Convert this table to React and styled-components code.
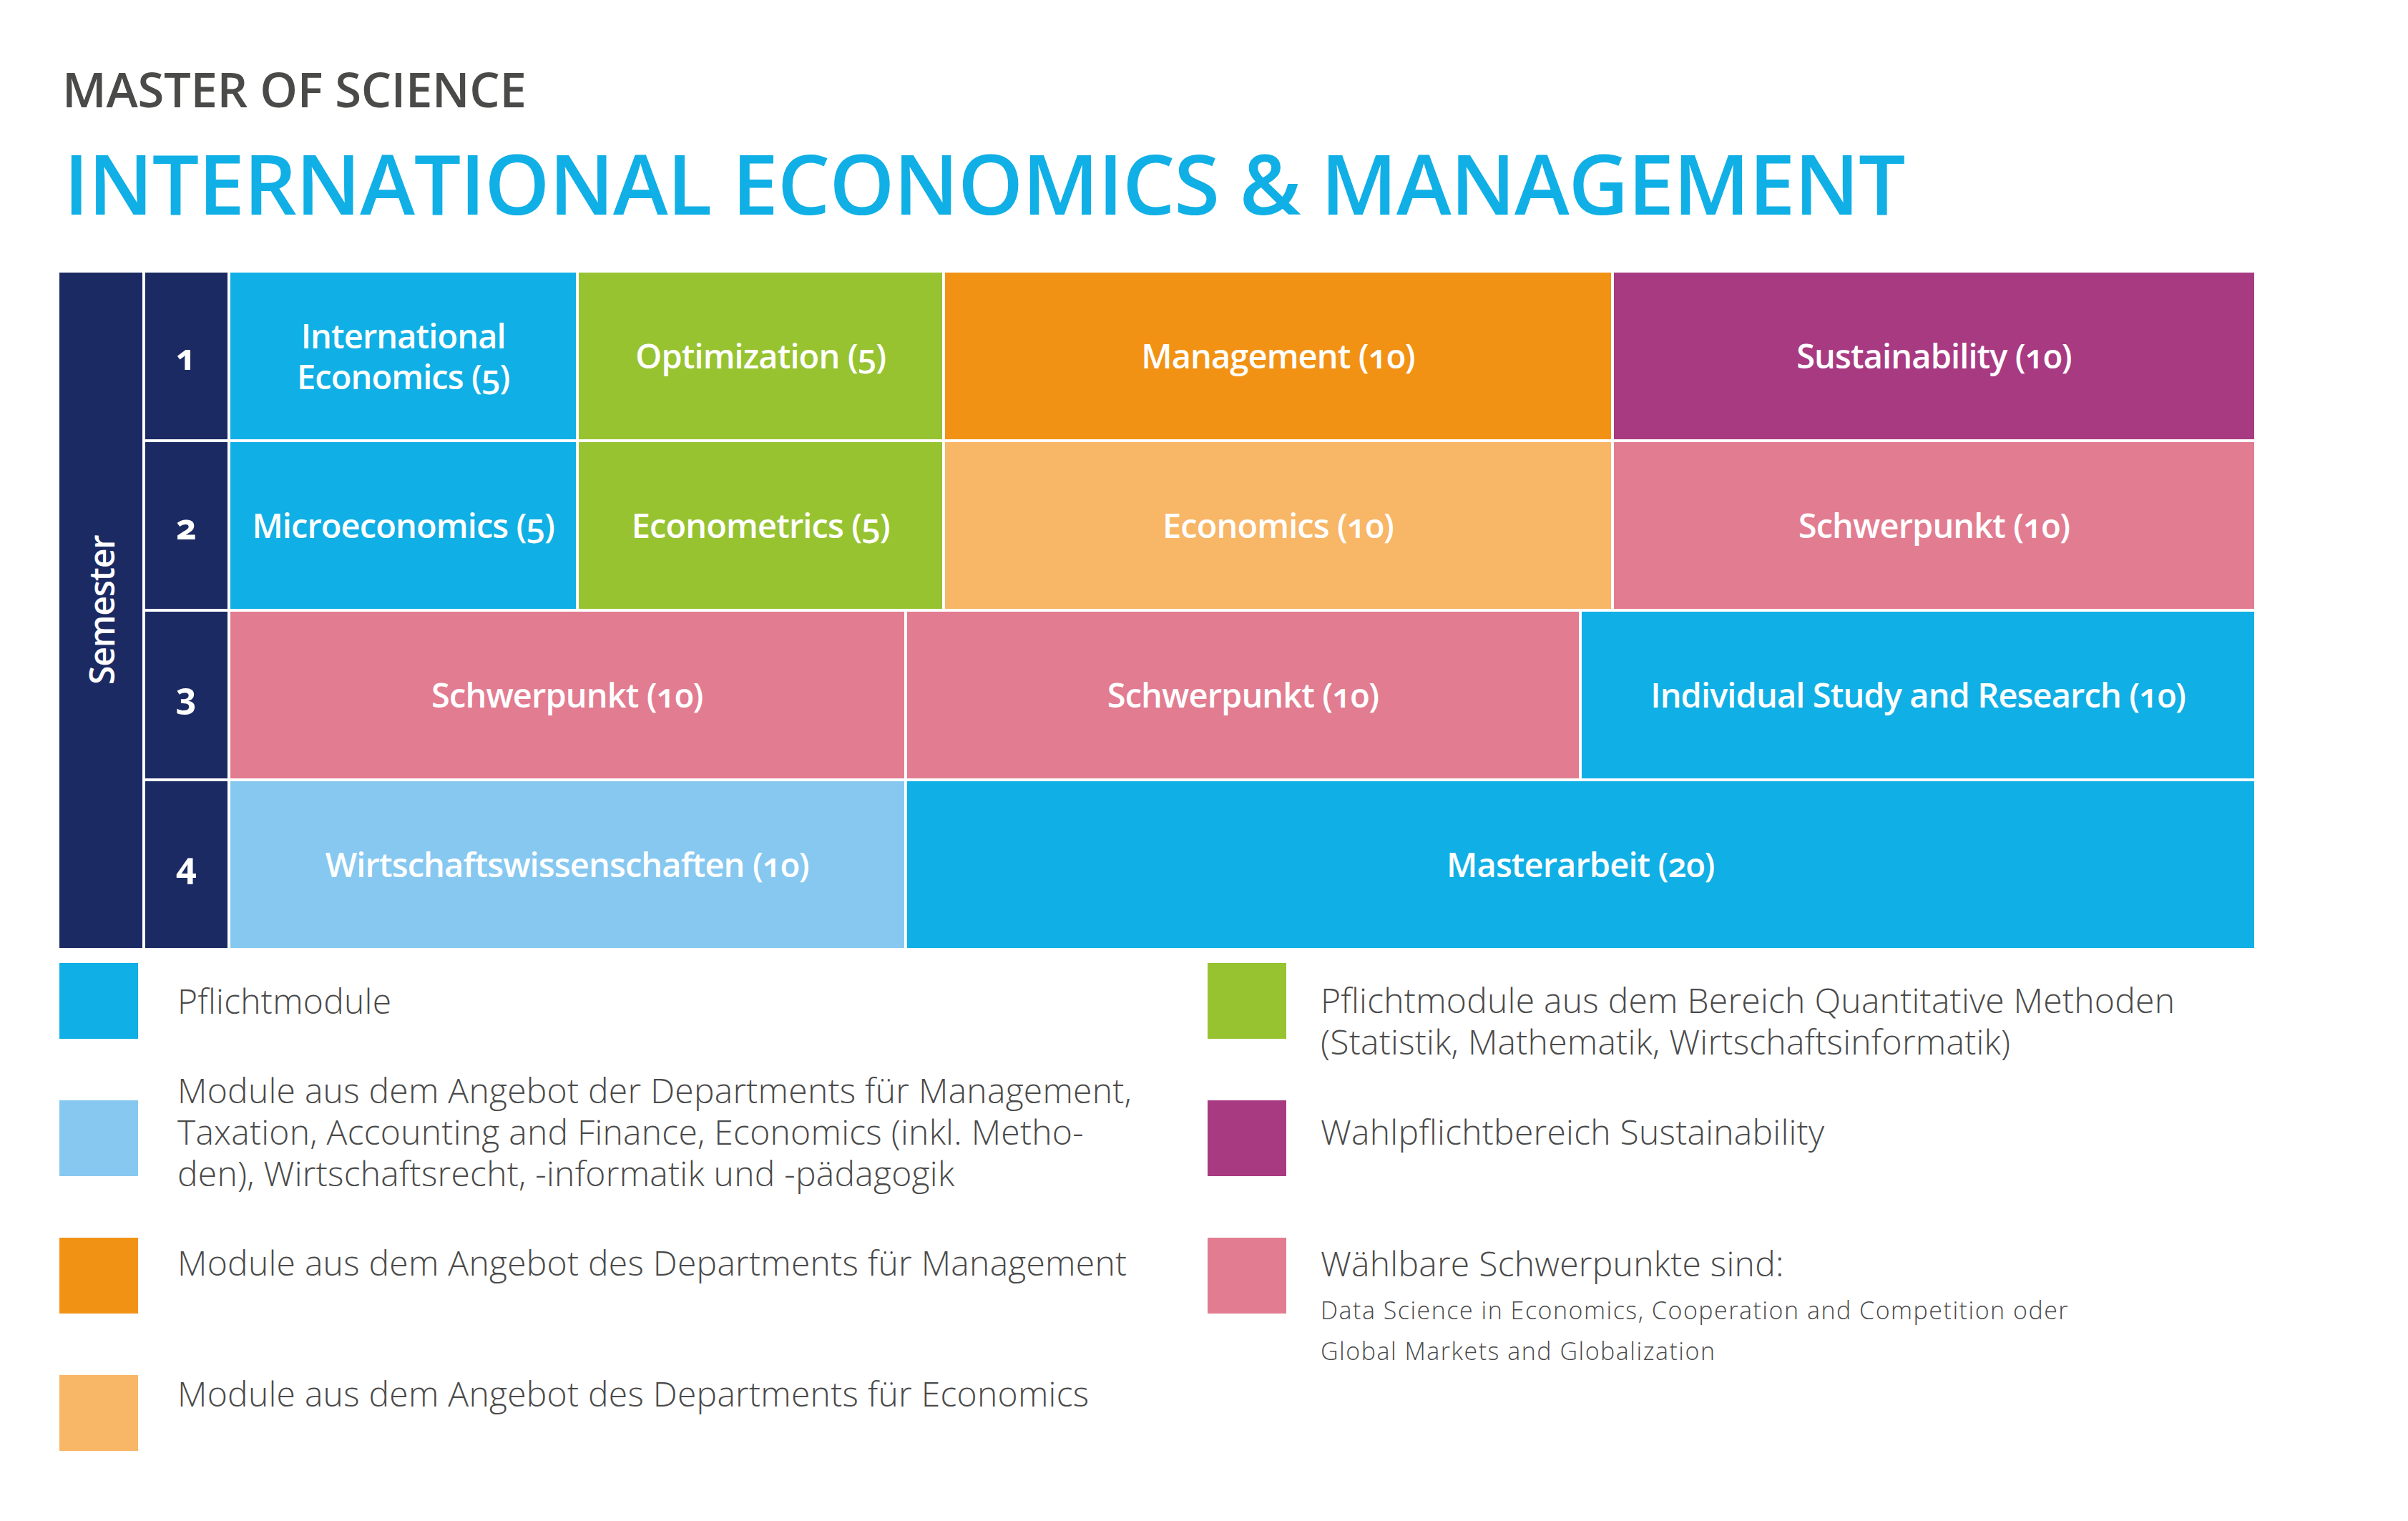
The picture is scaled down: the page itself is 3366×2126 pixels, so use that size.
import React from 'react';
import styled, { createGlobalStyle } from 'styled-components';

const GlobalStyle = createGlobalStyle`
  html, body {
    margin: 0;
    padding: 0;
    background: #ffffff;
  }
  body {
    font-family: "Open Sans", "Noto Sans", sans-serif;
    -webkit-font-smoothing: antialiased;
  }
`;

const colors = {
  navy: '#1c2a63',
  cyan: '#10afe5',
  lightBlue: '#86c8f0',
  green: '#97c331',
  orange: '#f29214',
  lightOrange: '#f8b667',
  purple: '#a83a82',
  pink: '#e27c91',
  text: '#4a4a4a',
};

const Page = styled.main`
  width: 3366px;
  height: 2126px;
  box-sizing: border-box;
  padding: 90px 0 0 83px;
  overflow: hidden;
`;

const Kicker = styled.h2`
  margin: 0 0 0 4px;
  font-size: 67px;
  line-height: 68px;
  font-weight: 600;
  color: #4a4a49;
  letter-spacing: -0.3px;
`;

const Title = styled.h1`
  margin: 37px 0 0 6px;
  font-size: 116px;
  line-height: 120px;
  font-weight: 600;
  color: ${colors.cyan};
  letter-spacing: -1.2px;
`;

const Table = styled.div`
  margin-top: 66px;
  width: 3068px;
  display: grid;
  grid-template-columns: 116px 115px 1fr;
  grid-template-rows: repeat(4, 233px);
  column-gap: 4px;
  row-gap: 4px;
`;

const SemesterLabel = styled.div`
  grid-row: 1 / span 4;
  background: ${colors.navy};
  display: flex;
  align-items: center;
  justify-content: center;
  color: #fff;
  font-size: 48px;
  font-weight: 600;
  letter-spacing: -1.2px;
  writing-mode: vertical-rl;
  transform: rotate(180deg);
`;

const SemesterNumber = styled.div`
  grid-column: 2;
  background: ${colors.navy};
  display: flex;
  align-items: center;
  justify-content: center;
  color: #fff;
  font-size: 50px;
  font-weight: 700;
  font-variant-numeric: oldstyle-nums;
`;

const ModuleRow = styled.div`
  grid-column: 3;
  display: grid;
  grid-template-columns: ${p => p.$cols};
  column-gap: 4px;
`;

const ModuleCell = styled.div`
  grid-column: span ${p => p.$span || 1};
  background: ${p => p.$color};
  display: flex;
  align-items: center;
  justify-content: center;
  text-align: center;
  color: #fff;
  font-size: 47px;
  line-height: 57px;
  font-weight: 600;
  letter-spacing: -0.9px;
  font-variant-numeric: oldstyle-nums;
  white-space: nowrap;
`;

const Legend = styled.div`
  margin-top: 21px;
  display: grid;
  grid-template-columns: 1605px 1fr;
`;

const LegendColumn = styled.div`
  display: flex;
  flex-direction: column;
  gap: 86px;
`;

const LegendItem = styled.div`
  display: flex;
  align-items: flex-start;
  height: 106px;
  gap: ${p => p.$gap}px;
`;

const Swatch = styled.div`
  flex: 0 0 110px;
  height: 106px;
  background: ${p => p.$color};
`;

const LegendText = styled.div`
  margin-top: ${p => p.$top}px;
  font-size: 48px;
  line-height: 58px;
  font-weight: 300;
  color: ${colors.text};
  white-space: nowrap;
  letter-spacing: 0.25px;
`;

const LegendNote = styled.div`
  margin-top: 8px;
  font-size: 34px;
  line-height: 57px;
  font-weight: 300;
  letter-spacing: 1.5px;
`;

const rows = [
  {
    cols: '484fr 508fr 932fr 896fr',
    cells: [
      { label: ['International', 'Economics (5)'], color: colors.cyan },
      { label: ['Optimization (5)'], color: colors.green },
      { label: ['Management (10)'], color: colors.orange },
      { label: ['Sustainability (10)'], color: colors.purple },
    ],
  },
  {
    cols: '484fr 508fr 932fr 896fr',
    cells: [
      { label: ['Microeconomics (5)'], color: colors.cyan },
      { label: ['Econometrics (5)'], color: colors.green },
      { label: ['Economics (10)'], color: colors.lightOrange },
      { label: ['Schwerpunkt (10)'], color: colors.pink },
    ],
  },
  {
    cols: '942fr 940fr 940fr',
    cells: [
      { label: ['Schwerpunkt (10)'], color: colors.pink },
      { label: ['Schwerpunkt (10)'], color: colors.pink },
      { label: ['Individual Study and Research (10)'], color: colors.cyan },
    ],
  },
  {
    cols: '942fr 940fr 940fr',
    cells: [
      { label: ['Wirtschaftswissenschaften (10)'], color: colors.lightBlue },
      { label: ['Masterarbeit (20)'], color: colors.cyan, span: 2 },
    ],
  },
];

const leftLegend = [
  { color: colors.cyan, top: 24, lines: ['Pflichtmodule'] },
  {
    color: colors.lightBlue,
    top: -43,
    lines: [
      'Module aus dem Angebot der Departments für Management,',
      'Taxation, Accounting and Finance, Economics (inkl. Metho-',
      'den), Wirtschaftsrecht, -informatik und -pädagogik',
    ],
  },
  { color: colors.orange, top: 6, lines: ['Module aus dem Angebot des Departments für Management'] },
  { color: colors.lightOrange, top: -3, lines: ['Module aus dem Angebot des Departments für Economics'] },
];

const rightLegend = [
  {
    color: colors.green,
    top: 23,
    lines: [
      'Pflichtmodule aus dem Bereich Quantitative Methoden',
      '(Statistik, Mathematik, Wirtschaftsinformatik)',
    ],
  },
  { color: colors.purple, top: 15, lines: ['Wahlpflichtbereich Sustainability'] },
  {
    color: colors.pink,
    top: 7,
    lines: ['Wählbare Schwerpunkte sind:'],
    note: [
      'Data Science in Economics, Cooperation and Competition oder',
      'Global Markets and Globalization',
    ],
  },
];

const withBreaks = lines =>
  lines.map((line, i) => (
    <React.Fragment key={i}>
      {i > 0 && <br />}
      {line}
    </React.Fragment>
  ));

const LegendList = ({ items, gap }) => (
  <LegendColumn>
    {items.map((item, i) => (
      <LegendItem key={i} $gap={gap}>
        <Swatch $color={item.color} />
        <LegendText $top={item.top}>
          {withBreaks(item.lines)}
          {item.note && <LegendNote>{withBreaks(item.note)}</LegendNote>}
        </LegendText>
      </LegendItem>
    ))}
  </LegendColumn>
);

const App = () => (
  <>
    <GlobalStyle />
    <Page>
      <Kicker>MASTER OF SCIENCE</Kicker>
      <Title>INTERNATIONAL ECONOMICS &amp; MANAGEMENT</Title>

      <Table>
        <SemesterLabel>Semester</SemesterLabel>
        {rows.map((row, r) => (
          <React.Fragment key={r}>
            <SemesterNumber style={{ gridRow: r + 1 }}>{r + 1}</SemesterNumber>
            <ModuleRow $cols={row.cols} style={{ gridRow: r + 1 }}>
              {row.cells.map((cell, c) => (
                <ModuleCell key={c} $color={cell.color} $span={cell.span}>
                  <span>{withBreaks(cell.label)}</span>
                </ModuleCell>
              ))}
            </ModuleRow>
          </React.Fragment>
        ))}
      </Table>

      <Legend>
        <LegendList items={leftLegend} gap={55} />
        <LegendList items={rightLegend} gap={48} />
      </Legend>
    </Page>
  </>
);

export default App;
